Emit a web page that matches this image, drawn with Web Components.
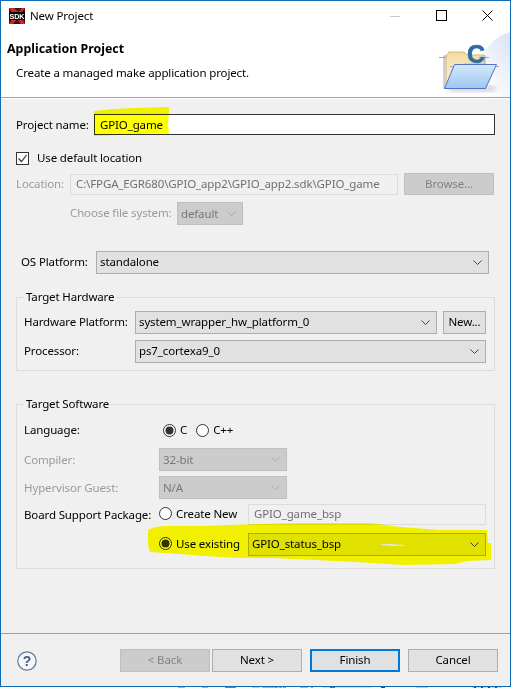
<!DOCTYPE html>
<html>
<head>
<meta charset="utf-8">
<title>New Project</title>
<style>
  html, body { margin: 0; padding: 0; background: #fff; }
  body { font: 11.5px/16px "Noto Sans", "Open Sans", sans-serif; letter-spacing: -.13px; color: #000; width: 511px; height: 688px; overflow: hidden; }
  ui-group { margin-left: 15px; width: 479px; }
  .row { display: flex; align-items: center; white-space: nowrap; }
  .lbl { flex: none; margin-bottom: 2px; }
  .off { color: #9a9a9a; }
</style>
</head>
<body>
<ui-dialog>
  <ui-titlebar slot="title" caption="New Project"></ui-titlebar>
  <ui-banner slot="banner" heading="Application Project" text="Create a managed make application project."></ui-banner>

  <div class="row" style="margin:15px 0 0 15px;height:21px">
    <span class="lbl" style="width:78px;margin-bottom:0">Project name:</span>
    <ui-input value="GPIO_game" strong style="width:401px;height:21px;line-height:20px"></ui-input>
  </div>
  <div class="row" style="margin:17px 0 0 15px;height:13px">
    <ui-check label="Use default location"></ui-check>
  </div>
  <div class="row" style="margin:8px 0 0 15px;height:22px">
    <span class="lbl off" style="width:54px;margin-bottom:0">Location:</span>
    <ui-input value="C:\FPGA_EGR680\GPIO_app2\GPIO_app2.sdk\GPIO_game" disabled style="width:328px;height:21px"></ui-input>
    <ui-button label="Browse..." disabled style="width:90px;height:22px;padding:0;margin-left:6px"></ui-button>
  </div>
  <div class="row" style="margin:7px 0 0 69px;height:23px">
    <span class="lbl off" style="width:107px">Choose file system:</span>
    <ui-select value="default" disabled style="width:66px"></ui-select>
  </div>
  <div class="row" style="margin:26px 0 0 20px;height:23px">
    <span class="lbl" style="width:75px">OS Platform:</span>
    <ui-select value="standalone" style="width:393px"></ui-select>
  </div>

  <ui-group legend="Target Hardware" style="margin-top:23px;height:74px">
    <div class="row" style="margin:13px 0 0 7px;height:23px">
      <span class="lbl" style="width:111px">Hardware Platform:</span>
      <ui-select value="system_wrapper_hw_platform_0" style="width:302px"></ui-select>
      <ui-button label="New..." style="width:43px;margin-left:6px"></ui-button>
    </div>
    <div class="row" style="margin:6px 0 0 7px;height:23px">
      <span class="lbl" style="width:111px">Processor:</span>
      <ui-select value="ps7_cortexa9_0" style="width:351px"></ui-select>
    </div>
  </ui-group>

  <ui-group legend="Target Software" style="margin-top:33px;height:165px">
    <div class="row" style="margin:17px 0 0 7px;height:16px">
      <span class="lbl" style="width:139px;margin-bottom:0">Language:</span>
      <ui-radio label="C" checked></ui-radio>
      <ui-radio label="C++" style="margin-left:9px"></ui-radio>
    </div>
    <div class="row" style="margin:10px 0 0 7px;height:23px">
      <span class="lbl off" style="width:135px;margin-bottom:0">Compiler:</span>
      <ui-select value="32-bit" disabled style="width:128px"></ui-select>
    </div>
    <div class="row" style="margin:5px 0 0 7px;height:23px">
      <span class="lbl off" style="width:135px;margin-bottom:0">Hypervisor Guest:</span>
      <ui-select value="N/A" disabled style="width:128px"></ui-select>
    </div>
    <div class="row" style="margin:5px 0 0 7px;height:21px">
      <span class="lbl" style="width:135px;margin-bottom:0">Board Support Package:</span>
      <ui-radio label="Create New" style="width:89px;margin-bottom:2px"></ui-radio>
      <ui-input value="GPIO_game_bsp" disabled style="width:238px;height:21px"></ui-input>
    </div>
    <div class="row" style="margin:8px 0 0 142px;height:23px">
      <ui-radio label="Use existing" checked style="width:89px;margin-bottom:2px"></ui-radio>
      <ui-select value="GPIO_status_bsp" style="width:238px"></ui-select>
    </div>
  </ui-group>

  <ui-footer slot="footer"></ui-footer>
  <ui-highlight slot="overlay"></ui-highlight>
</ui-dialog>
<ui-desktop-edge></ui-desktop-edge>

<script>
// shorthand, every element gets its own shadow root and style
function shadow(el, html) {
  el.attachShadow({ mode: 'open' }).innerHTML = html;
}

class UiDialog extends HTMLElement {
  connectedCallback() {
    shadow(this, `
      <style>
        :host { display: flex; flex-direction: column; position: relative; box-sizing: border-box; width: 511px; height: 687px; border: 1px solid #0f6cb4; background: #f0f0f0; }
        .body { flex: 1; min-height: 0; }
      </style>
      <slot name="title"></slot>
      <slot name="banner"></slot>
      <div class="body"><slot></slot></div>
      <slot name="footer"></slot>
      <slot name="overlay"></slot>`);
  }
}

class UiTitlebar extends HTMLElement {
  connectedCallback() {
    shadow(this, `
      <style>
        :host { display: flex; align-items: center; height: 29px; background: #fff; }
        svg { display: block; flex: none; }
        .logo { margin-left: 8px; }
        .cap { margin-left: 5px; flex: 1; }
        .ctl { width: 46px; height: 29px; display: flex; align-items: center; justify-content: center; }
      </style>
      <svg class="logo" width="16" height="16" viewBox="0 0 16 16">
        <rect width="16" height="16" fill="#3a1212"/>
        <path d="M0 0h5l4 4 4-4h3L11 7l5 9h-4L8 11l-4 5H0l5-8z" fill="#d0262c"/>
        <rect x="0" y="4" width="16" height="8" fill="#0c0c0c"/>
        <text x="8" y="11" text-anchor="middle" textLength="15" lengthAdjust="spacingAndGlyphs" letter-spacing="0" font-family="Liberation Sans" font-weight="700" font-size="8" fill="#fff">SDK</text>
      </svg>
      <span class="cap">${this.getAttribute('caption')}</span>
      <span class="ctl"><svg width="10" height="10"><path d="M0 5.5h10" stroke="#c8c8c8"/></svg></span>
      <span class="ctl"><svg width="11" height="11"><rect x=".5" y=".5" width="10" height="10" fill="none" stroke="#000"/></svg></span>
      <span class="ctl"><svg width="11" height="11"><path d="M.5.5l10 10M10.5.5l-10 10" stroke="#000" fill="none"/></svg></span>`);
  }
}

class UiBanner extends HTMLElement {
  connectedCallback() {
    shadow(this, `
      <style>
        :host { display: flex; justify-content: space-between; height: 67px; background: #fff; border-bottom: 1px solid #a0a0a0; box-shadow: 0 1px 0 #fff; margin-bottom: 1px; }
        h1 { font: 700 12.4px/16px "Noto Sans", sans-serif; letter-spacing: 0; margin: 11px 0 0 6px; }
        p { margin: 8px 0 0 15px; }
        svg { display: block; flex: none; }
      </style>
      <div>
        <h1>${this.getAttribute('heading')}</h1>
        <p>${this.getAttribute('text')}</p>
      </div>
      <svg width="76" height="67" viewBox="0 0 76 67">
        <defs>
          <linearGradient id="bg" x1="0" y1="1" x2="1" y2="0"><stop offset=".3" stop-color="#fff"/><stop offset=".9" stop-color="#dfe6f6"/></linearGradient>
          <linearGradient id="back" x1="0" y1="0" x2="0" y2="1"><stop offset="0" stop-color="#f3dca2"/><stop offset="1" stop-color="#fbf2d6"/></linearGradient>
          <linearGradient id="front" x1="0" y1="0" x2="0" y2="1"><stop offset="0" stop-color="#d4e9fc"/><stop offset="1" stop-color="#9ec7ef"/></linearGradient>
          <filter id="soft"><feGaussianBlur stdDeviation="2.5"/></filter>
        </defs>
        <path d="M76 2C55 8 42 30 26 67h50z" fill="url(#bg)"/>
        <path d="M14 56h50l-6 6H16z" fill="#9aa0b8" opacity=".45" filter="url(#soft)"/>
        <rect x="10" y="26" width="41" height="32" fill="#e8e8f0" stroke="#a9a9c4"/>
        <path d="M12 56V26l3-4h15l3 3h17v9H30z" fill="url(#back)" stroke="#c9ab6c" stroke-width=".8"/>
        <path d="M5 27.5h7M45 27.5h10M16 36.5h5M62 36.5h3" stroke="#aaa" stroke-width="1.2"/>
        <text x="33" y="33" font-family="Liberation Sans" font-weight="700" font-size="25" letter-spacing="0" fill="#2e6ca4" stroke="#2e6ca4" stroke-width=".6">C</text>
        <path d="M10.5 58.5l10-24h42l-11 24z" fill="url(#front)" stroke="#5470c8" stroke-width="1"/>
      </svg>`);
  }
}

class UiInput extends HTMLElement {
  connectedCallback() {
    const off = this.hasAttribute('disabled');
    shadow(this, `
      <style>
        :host { display: block; box-sizing: border-box; flex: none; padding-left: 5px; line-height: 18px; border: 1px solid ${off ? '#dcdcdc' : '#333'}; background: ${off ? '#f0f0f0' : '#fff'}; color: ${off ? '#707070' : '#000'}; white-space: nowrap; overflow: hidden; }
      </style>${this.getAttribute('value')}`);
  }
}

class UiSelect extends HTMLElement {
  connectedCallback() {
    const off = this.hasAttribute('disabled');
    shadow(this, `
      <style>
        :host { display: flex; align-items: center; justify-content: space-between; box-sizing: border-box; flex: none; height: 23px; padding: 0 6px ${off ? 0 : 2}px 3px; border: 1px solid ${off ? '#bfbfbf' : '#adadad'}; background: ${off ? '#ccc' : '#e1e1e1'}; color: ${off ? '#777' : '#000'}; white-space: nowrap; }
        svg { display: block; flex: none; margin-top: ${off ? 0 : 2}px; }
      </style>
      <span>${this.getAttribute('value')}</span>
      <svg width="9" height="5"><path d="M.5.5l4 4 4-4" fill="none" stroke="${off ? '#a9a9a9' : '#444'}"/></svg>`);
  }
}

class UiButton extends HTMLElement {
  connectedCallback() {
    const off = this.hasAttribute('disabled');
    const main = this.hasAttribute('default');
    shadow(this, `
      <style>
        :host { display: flex; align-items: center; justify-content: center; box-sizing: border-box; flex: none; height: 23px; padding-bottom: 2px; border: ${main ? '2px solid #0078d7' : '1px solid ' + (off ? '#bfbfbf' : '#adadad')}; background: ${off ? '#ccc' : '#e1e1e1'}; color: ${off ? '#838383' : '#000'}; }
      </style>${this.getAttribute('label')}`);
  }
}

class UiCheck extends HTMLElement {
  connectedCallback() {
    shadow(this, `
      <style>
        :host { display: flex; align-items: center; }
        svg { display: block; margin-right: 8px; }
        span { margin-bottom: 2px; }
      </style>
      <svg width="13" height="13"><rect x=".5" y=".5" width="12" height="12" fill="#fff" stroke="#333"/><path d="M2.5 6.5l3 3 5-6.5" fill="none" stroke="#333" stroke-width="1.2"/></svg>
      <span>${this.getAttribute('label')}</span>`);
  }
}

class UiRadio extends HTMLElement {
  connectedCallback() {
    const on = this.hasAttribute('checked');
    shadow(this, `
      <style>
        :host { display: flex; align-items: center; flex: none; }
        svg { display: block; margin-right: 4px; }
      </style>
      <svg width="13" height="13"><circle cx="6.5" cy="6.5" r="6" fill="#fff" stroke="#333"/>${on ? '<circle cx="6.5" cy="6.5" r="4" fill="#333"/>' : ''}</svg>
      ${this.getAttribute('label')}`);
  }
}

class UiGroup extends HTMLElement {
  connectedCallback() {
    shadow(this, `
      <style>
        :host { display: block; position: relative; box-sizing: border-box; border: 1px solid #dcdcdc; }
        .legend { position: absolute; left: 7px; top: -9px; padding: 0 2px; background: #f0f0f0; }
        slot { display: block; }
      </style>
      <div class="legend">${this.getAttribute('legend')}</div>
      <slot></slot>`);
  }
}

class UiFooter extends HTMLElement {
  connectedCallback() {
    shadow(this, `
      <style>
        :host { display: flex; align-items: center; box-sizing: border-box; height: 53px; border-top: 1px solid #a0a0a0; padding: 1px 11px 0 16px; }
        svg { display: block; flex: none; margin-right: 83px; }
      </style>
      <svg width="20" height="20" viewBox="0 0 20 20">
        <circle cx="10" cy="10" r="9.2" fill="#f4f6fa" stroke="#66789c" stroke-width="1.2"/>
        <text x="10" y="15" text-anchor="middle" letter-spacing="0" font-family="Liberation Sans" font-weight="700" font-size="14" fill="#44587f">?</text>
      </svg>
      <ui-button label="&lt; Back" disabled style="width:90px"></ui-button>
      <ui-button label="Next &gt;" style="width:90px;margin-left:2px"></ui-button>
      <ui-button label="Finish" default style="width:90px;margin-left:8px"></ui-button>
      <ui-button label="Cancel" style="width:90px;margin-left:8px"></ui-button>`);
  }
}

// the strip of desktop that shows under the window
class UiDesktopEdge extends HTMLElement {
  connectedCallback() {
    const bits = [[178,7,'#c8b46a'],[202,6,'#c8b46a'],[225,11,'#8f8240'],[252,8,'#b8cde0'],[262,14,'#9fb6cc'],[275,3,'#8fa0b0'],[279,3,'#8fa0b0'],[283,3,'#8fa0b0'],[300,8,'#c8b46a'],[311,2,'#8fa0b0'],[322,50,'#d4dee8'],[330,5,'#5c6c7c'],[381,4,'#1c4c7c'],[416,12,'#c8cfa8'],[472,30,'#c4d4e4'],[474,2,'#345'],[481,2,'#345'],[488,2,'#345'],[495,2,'#345']];
    shadow(this, `
      <style>
        :host { display: block; height: 1px; background: #fff; }
        svg { display: block; }
      </style>
      <svg width="511" height="1">${bits.map(b => `<rect x="${b[0]}" width="${b[1]}" height="1" fill="${b[2]}"/>`).join('')}</svg>`);
  }
}

// marker strokes lie over the form, multiply keeps the text readable
class UiHighlight extends HTMLElement {
  connectedCallback() {
    shadow(this, `
      <style>
        :host { position: absolute; left: -1px; top: -1px; width: 511px; height: 688px; mix-blend-mode: multiply; pointer-events: none; }
        svg { display: block; }
      </style>
      <svg width="511" height="688">
        <path d="M94 111L114 109 134 108 169 107 169 113 168 123 169 134 154 133 142 134 118 135 94 136Z" fill="#ff0"/>
        <path d="M148 530L155 527 165 526 205 526 256 524 300 523 370 523 400 527 440 530 487 530 488 543 491 543 491 560 466 561 456 564 403 565 356 562 273 558 240 558 205 556 165 553 150 552 148 545Z" fill="#ff0"/>
        <path d="M381 544L392 544 404 545 404 546 392 546 381 545Z" fill="#fff"/>
      </svg>`);
  }
}

customElements.define('ui-dialog', UiDialog);
customElements.define('ui-titlebar', UiTitlebar);
customElements.define('ui-banner', UiBanner);
customElements.define('ui-input', UiInput);
customElements.define('ui-select', UiSelect);
customElements.define('ui-button', UiButton);
customElements.define('ui-check', UiCheck);
customElements.define('ui-radio', UiRadio);
customElements.define('ui-group', UiGroup);
customElements.define('ui-footer', UiFooter);
customElements.define('ui-desktop-edge', UiDesktopEdge);
customElements.define('ui-highlight', UiHighlight);
</script>
</body>
</html>
